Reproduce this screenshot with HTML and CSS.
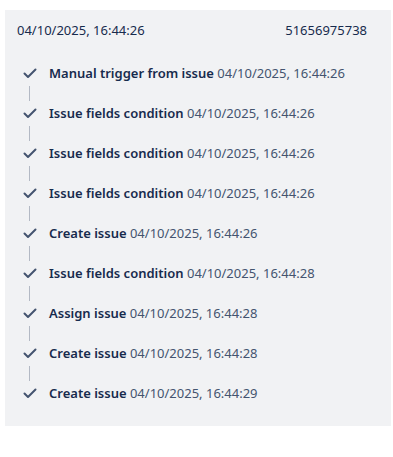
FILE: index.html
```html
<!DOCTYPE html>
<html lang="en">
  <head>
    <meta charset="UTF-8" />
    <meta name="viewport" content="width=device-width, initial-scale=1.0" />
    <title>Audit log</title>
    <link rel="stylesheet" href="styles.css">
  </head>
  <body>
    <div class="panel">
      <div class="panel-header">
        <span>04/10/2025, 16:44:26</span>
        <span>51656975738</span>
      </div>

      <ul class="steps">
        <li class="step">
          <svg class="check" viewBox="0 0 16 16"><path d="M2.5 8.5l3.5 3.5 7.5-7.5" /></svg>
          <span><b>Manual trigger from issue</b> <span class="time">04/10/2025, 16:44:26</span></span>
        </li>
        <li class="step">
          <svg class="check" viewBox="0 0 16 16"><path d="M2.5 8.5l3.5 3.5 7.5-7.5" /></svg>
          <span><b>Issue fields condition</b> <span class="time">04/10/2025, 16:44:26</span></span>
        </li>
        <li class="step">
          <svg class="check" viewBox="0 0 16 16"><path d="M2.5 8.5l3.5 3.5 7.5-7.5" /></svg>
          <span><b>Issue fields condition</b> <span class="time">04/10/2025, 16:44:26</span></span>
        </li>
        <li class="step">
          <svg class="check" viewBox="0 0 16 16"><path d="M2.5 8.5l3.5 3.5 7.5-7.5" /></svg>
          <span><b>Issue fields condition</b> <span class="time">04/10/2025, 16:44:26</span></span>
        </li>
        <li class="step">
          <svg class="check" viewBox="0 0 16 16"><path d="M2.5 8.5l3.5 3.5 7.5-7.5" /></svg>
          <span><b>Create issue</b> <span class="time">04/10/2025, 16:44:26</span></span>
        </li>
        <li class="step">
          <svg class="check" viewBox="0 0 16 16"><path d="M2.5 8.5l3.5 3.5 7.5-7.5" /></svg>
          <span><b>Issue fields condition</b> <span class="time">04/10/2025, 16:44:28</span></span>
        </li>
        <li class="step">
          <svg class="check" viewBox="0 0 16 16"><path d="M2.5 8.5l3.5 3.5 7.5-7.5" /></svg>
          <span><b>Assign issue</b> <span class="time">04/10/2025, 16:44:28</span></span>
        </li>
        <li class="step">
          <svg class="check" viewBox="0 0 16 16"><path d="M2.5 8.5l3.5 3.5 7.5-7.5" /></svg>
          <span><b>Create issue</b> <span class="time">04/10/2025, 16:44:28</span></span>
        </li>
        <li class="step">
          <svg class="check" viewBox="0 0 16 16"><path d="M2.5 8.5l3.5 3.5 7.5-7.5" /></svg>
          <span><b>Create issue</b> <span class="time">04/10/2025, 16:44:29</span></span>
        </li>
      </ul>
    </div>
  </body>
</html>
```

FILE: styles.css
```css
* {
  margin: 0;
  padding: 0;
  box-sizing: border-box;
}

body {
  font-family: "Noto Sans", "Open Sans", sans-serif;
  font-size: 13px;
  color: #172b4d;
  background: #ffffff;
}

.panel {
  margin: 10px 2px 0 5px;
  height: 416px;
  background: #f1f2f4;
  padding: 10px 24px 0 12px;
}

.panel-header {
  display: flex;
  justify-content: space-between;
  line-height: 20px;
}

.steps {
  list-style: none;
  margin-top: 23px;
  padding-left: 5px;
}

.step {
  position: relative;
  display: flex;
  align-items: center;
  gap: 11px;
  height: 20px;
  line-height: 20px;
}

.step + .step {
  margin-top: 20px;
}

.step + .step::before {
  content: "";
  position: absolute;
  left: 7px;
  top: -17px;
  width: 1px;
  height: 15px;
  background: #b3b9c4;
}

.check {
  width: 16px;
  height: 16px;
  flex-shrink: 0;
  fill: none;
  stroke: #44546f;
  stroke-width: 2;
  stroke-linecap: round;
  stroke-linejoin: round;
}

.step b {
  font-weight: 600;
}

.time {
  color: #44546f;
}
```
